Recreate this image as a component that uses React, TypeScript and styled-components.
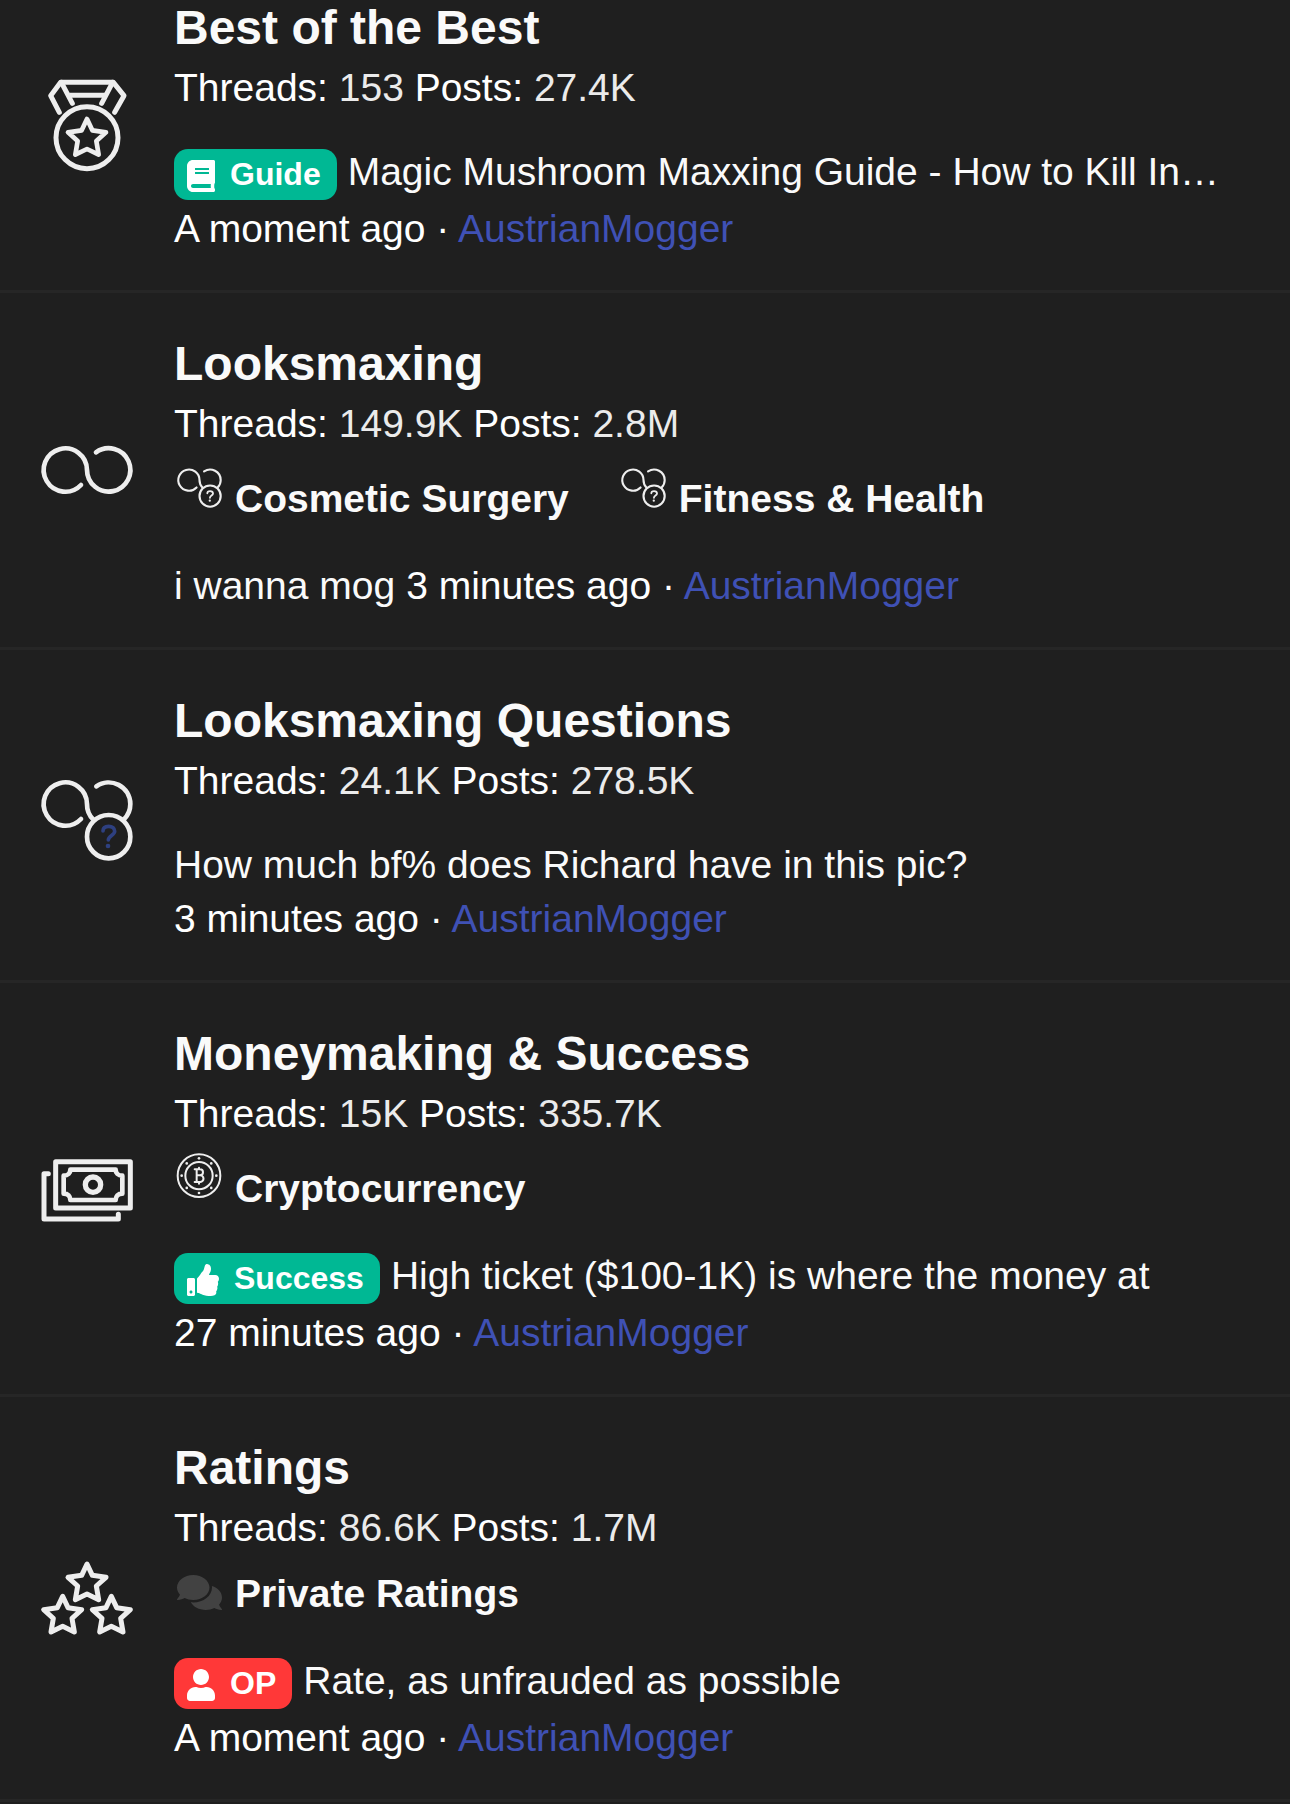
import React from "react";
import styled, { createGlobalStyle } from "styled-components";
import { FaBook, FaComments, FaThumbsUp, FaUser } from "react-icons/fa";

const GlobalStyle = createGlobalStyle`
  *, *::before, *::after { box-sizing: border-box; }
  html { background: #1f1f1f; }
  body {
    margin: 0;
    background: #1f1f1f;
    color: #ffffff;
    font-family: "Liberation Sans", "Helvetica Neue", Helvetica, Arial, sans-serif;
    font-size: 39px;
    line-height: 54px;
  }
  a { color: inherit; text-decoration: none; }
  h3, dl, dt, dd, ul, li { margin: 0; padding: 0; list-style: none; }
`;

const ForumList = styled.main`
  display: flow-root;
  overflow-x: hidden;
`;

/* The list is scrolled a little past the top edge of the first row. */
const Rows = styled.div`
  margin-top: -43px;
`;

const Row = styled.article`
  display: flex;
  align-items: stretch;
  border-bottom: 3px solid #262626;
`;

const IconCell = styled.div`
  flex: none;
  display: flex;
  align-items: center;
  padding: 0 41px;
`;

const NodeIcon = styled.svg`
  display: block;
  width: 92px;
  height: 92px;
  overflow: visible;
  fill: none;
  stroke: #eeeeee;
  stroke-linecap: round;
  stroke-linejoin: round;
`;

const Main = styled.div`
  flex: 1;
  min-width: 0;
  padding: 36px 59px 34px 0;
`;

const Title = styled.h3`
  padding-top: 2px;
  font-size: 48px;
  line-height: 66px;
  font-weight: 700;
  color: #fafafa;
`;

const Stats = styled.dl`
  dt, dd { display: inline; }
  dd { color: #ebebeb; }
`;

const SubForums = styled.ul`
  display: flex;
  flex-wrap: wrap;
  column-gap: 52px;
  padding: 12px 0 3px 3px;
`;

const SubForum = styled.li`
  display: flex;
  align-items: flex-end;
  gap: 13px;
  font-weight: 700;
  color: #fafafa;
`;

const SubIcon = styled.span<{ $lift: number }>`
  flex: none;
  display: block;
  width: 45px;
  height: 45px;
  margin-bottom: ${(p) => p.$lift}px;
  color: #424242;

  svg { display: block; width: 45px; height: 45px; }
`;

const SubDrawing = styled.svg`
  overflow: visible;
  fill: none;
  stroke: #eeeeee;
  stroke-linecap: round;
  stroke-linejoin: round;
`;

const Latest = styled.div`
  display: flex;
  flex-wrap: wrap;
  column-gap: 11px;
  margin-top: 30px;
`;

const LatestTitle = styled.div`
  display: flex;
  align-items: baseline;
  gap: 11px;
  min-width: 0;
  max-width: 100%;
  color: #fafafa;
`;

const ThreadLink = styled.a`
  min-width: 0;
  overflow: hidden;
  white-space: nowrap;
  text-overflow: ellipsis;
`;

const Badge = styled.a<{ $tone: string; $iconWidth: number }>`
  flex: none;
  display: inline-flex;
  align-items: baseline;
  gap: 15px;
  margin-bottom: 2px;
  padding: 0 16px 0 13px;
  border-radius: 14px;
  background: ${(p) => p.$tone};
  color: #ffffff;
  font-size: 32px;
  line-height: 51px;
  font-weight: 700;

  svg {
    flex: none;
    align-self: center;
    width: ${(p) => p.$iconWidth}px;
    height: 32px;
    margin-top: 3px;
  }
`;

const UserLink = styled.a`
  color: #3f51b5;
`;

const starPath =
  "M171 72 L187 106 L228 112 L199 138 L206 179 L171 162 L136 179 L143 138 L114 112 L155 106 Z";

const MedalIcon = () => (
  <NodeIcon viewBox="33 52 276 276" strokeWidth={15} aria-hidden="true">
    <circle cx="171" cy="231" r="93" />
    <path d="M88 155 L62 105 L92 65 H250 L282 105 L254 155" />
    <path d="M94 65 L127 128 M248 65 L215 128" />
    <path d="M118 104 H225" strokeLinecap="butt" />
    <path d={starPath} transform="translate(0 103)" strokeWidth={14} />
  </NodeIcon>
);

const LoopIcon = () => (
  <NodeIcon viewBox="33 -18 276 276" strokeWidth={14} aria-hidden="true">
    <path d="M153 165 A65 65 0 1 1 171 120 A65 65 0 1 0 198 67" />
  </NodeIcon>
);

const LoopQuestionShape = ({ mark }: { mark: string }) => (
  <>
    <path d="M153 147 A65 65 0 1 1 171 102 A65 65 0 0 0 190 149" />
    <path d="M199 49 A65 65 0 0 1 301 102 A65 65 0 0 1 282 148" />
    <circle cx="236" cy="200" r="65" />
    <path
      d="M219 183 C219 173 226 169 236 169 C247 169 254 175 254 184 C254 196 235 197 235 210"
      stroke={mark}
      strokeWidth={11}
    />
    <circle cx="234" cy="228" r="7" fill={mark} stroke="none" />
  </>
);

const LoopQuestionIcon = () => (
  <NodeIcon viewBox="33 -3 276 276" strokeWidth={14} aria-hidden="true">
    <LoopQuestionShape mark="#2e4080" />
  </NodeIcon>
);

const CashIcon = () => (
  <NodeIcon viewBox="33 8 276 276" strokeWidth={15} aria-hidden="true">
    <rect x="77" y="64" width="224" height="139" />
    <path d="M55 100 H42 V236 H265 V222" />
    <path
      d="M121 88 H257 C257 98 264 106 277 106 V160 C264 160 257 168 257 179 H121 C121 168 114 160 101 160 V106 C114 106 121 98 121 88 Z"
      strokeWidth={14}
    />
    <circle cx="189" cy="133" r="23" strokeWidth={16} />
  </NodeIcon>
);

const StarsIcon = () => (
  <NodeIcon viewBox="33 36 276 276" strokeWidth={15} aria-hidden="true">
    <path d={starPath} />
    <path d={starPath} transform="translate(-73 97)" />
    <path d={starPath} transform="translate(73 97)" />
  </NodeIcon>
);

const SmallLoopQuestionIcon = () => (
  <SubDrawing viewBox="33 -3 276 276" strokeWidth={13} aria-hidden="true">
    <LoopQuestionShape mark="#eeeeee" />
  </SubDrawing>
);

const coinDots = Array.from({ length: 8 }, (_, i) => {
  const angle = (i * Math.PI) / 4;
  return { x: 507 + 52 * Math.cos(angle), y: 108 + 52 * Math.sin(angle) };
});

const CoinIcon = () => (
  <SubDrawing viewBox="441 40 135 135" strokeWidth={6} aria-hidden="true">
    <circle cx="507" cy="108" r="64" />
    <circle cx="507" cy="108" r="41" />
    {coinDots.map((d, i) => (
      <circle key={i} cx={d.x} cy={d.y} r="4" fill="#eeeeee" stroke="none" />
    ))}
    <path d="M494 89 H510 A9 9 0 0 1 510 107 H500 M510 107 A10 10 0 0 1 511 127 H494 M500 89 V127 M507 84 V89 M507 127 V132" />
  </SubDrawing>
);

type Sub = { name: string; icon: React.ReactNode; lift: number };

type Forum = {
  name: string;
  threads: string;
  posts: string;
  icon: React.ReactNode;
  subs?: Sub[];
  badge?: { label: string; tone: string; icon: React.ReactNode; iconWidth: number };
  thread: string;
  time: string;
};

const forums: Forum[] = [
  {
    name: "Best of the Best",
    threads: "153",
    posts: "27.4K",
    icon: <MedalIcon />,
    badge: { label: "Guide", tone: "#00b894", icon: <FaBook />, iconWidth: 28 },
    thread: "Magic Mushroom Maxxing Guide - How to Kill In…",
    time: "A moment ago",
  },
  {
    name: "Looksmaxing",
    threads: "149.9K",
    posts: "2.8M",
    icon: <LoopIcon />,
    subs: [
      { name: "Cosmetic Surgery", icon: <SmallLoopQuestionIcon />, lift: 18 },
      { name: "Fitness & Health", icon: <SmallLoopQuestionIcon />, lift: 18 },
    ],
    thread: "i wanna mog",
    time: "3 minutes ago",
  },
  {
    name: "Looksmaxing Questions",
    threads: "24.1K",
    posts: "278.5K",
    icon: <LoopQuestionIcon />,
    thread: "How much bf% does Richard have in this pic?",
    time: "3 minutes ago",
  },
  {
    name: "Moneymaking & Success",
    threads: "15K",
    posts: "335.7K",
    icon: <CashIcon />,
    subs: [{ name: "Cryptocurrency", icon: <CoinIcon />, lift: 18 }],
    badge: { label: "Success", tone: "#00b894", icon: <FaThumbsUp />, iconWidth: 32 },
    thread: "High ticket ($100-1K) is where the money at",
    time: "27 minutes ago",
  },
  {
    name: "Ratings",
    threads: "86.6K",
    posts: "1.7M",
    icon: <StarsIcon />,
    subs: [{ name: "Private Ratings", icon: <FaComments />, lift: 6 }],
    badge: { label: "OP", tone: "#ff3838", icon: <FaUser />, iconWidth: 28 },
    thread: "Rate, as unfrauded as possible",
    time: "A moment ago",
  },
];

const ForumRow = ({ forum }: { forum: Forum }) => (
  <Row>
    <IconCell>{forum.icon}</IconCell>
    <Main>
      <Title>
        <a href="#forum">{forum.name}</a>
      </Title>
      <Stats>
        <dt>Threads:</dt> <dd>{forum.threads}</dd> <dt>Posts:</dt> <dd>{forum.posts}</dd>
      </Stats>
      {forum.subs && (
        <SubForums>
          {forum.subs.map((sub) => (
            <SubForum key={sub.name}>
              <SubIcon $lift={sub.lift}>{sub.icon}</SubIcon>
              <a href="#subforum">{sub.name}</a>
            </SubForum>
          ))}
        </SubForums>
      )}
      <Latest>
        <LatestTitle>
          {forum.badge && (
            <Badge href="#prefix" $tone={forum.badge.tone} $iconWidth={forum.badge.iconWidth}>
              {forum.badge.icon}
              <span>{forum.badge.label}</span>
            </Badge>
          )}
          <ThreadLink href="#thread">{forum.thread}</ThreadLink>
        </LatestTitle>
        <div>
          <time>{forum.time}</time> · <UserLink href="#member">AustrianMogger</UserLink>
        </div>
      </Latest>
    </Main>
  </Row>
);

export default function App() {
  return (
    <ForumList>
      <GlobalStyle />
      <Rows>
        {forums.map((forum) => (
          <ForumRow key={forum.name} forum={forum} />
        ))}
      </Rows>
    </ForumList>
  );
}
